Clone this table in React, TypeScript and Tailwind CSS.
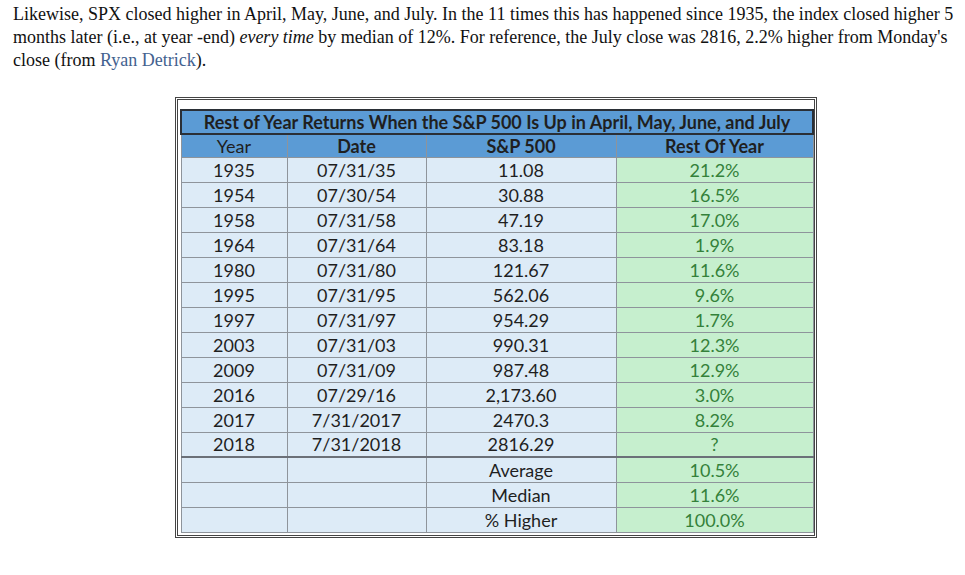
const rows: [string, string, string, string][] = [
  ["1935", "07/31/35", "11.08", "21.2%"],
  ["1954", "07/30/54", "30.88", "16.5%"],
  ["1958", "07/31/58", "47.19", "17.0%"],
  ["1964", "07/31/64", "83.18", "1.9%"],
  ["1980", "07/31/80", "121.67", "11.6%"],
  ["1995", "07/31/95", "562.06", "9.6%"],
  ["1997", "07/31/97", "954.29", "1.7%"],
  ["2003", "07/31/03", "990.31", "12.3%"],
  ["2009", "07/31/09", "987.48", "12.9%"],
  ["2016", "07/29/16", "2,173.60", "3.0%"],
  ["2017", "7/31/2017", "2470.3", "8.2%"],
  ["2018", "7/31/2018", "2816.29", "?"],
];

const summary: [string, string][] = [
  ["Average", "10.5%"],
  ["Median", "11.6%"],
  ["% Higher", "100.0%"],
];

const cell = "h-[25px] border border-[#8e949b] p-0 text-center align-middle leading-none";
const head = "h-[23px] border border-[#8e949b] border-t-2 border-t-[#2a2f36] p-0 text-center align-middle leading-none";

export default function App() {
  return (
    <div className="min-h-[575px] w-[965px] bg-white">
      <p className="whitespace-nowrap px-[13px] pt-[3px] font-['Liberation_Serif',serif] text-[18px] leading-[23px] text-[#111]">
        Likewise, SPX closed higher in April, May, June, and July. In the 11 times this has happened since 1935, the index closed higher 5
        <br />
        months later (i.e., at year -end) <em>every time</em> by median of 12%. For reference, the July close was 2816, 2.2% higher from Monday's
        <br />
        close (from <a className="text-[#43628f]">Ryan Detrick</a>).
      </p>

      <div className="ml-[175px] mt-[25px] w-[642px] border-[3px] border-double border-[#444] bg-white px-[2px] pb-[2px] pt-[9px]">
        <table className="w-[632px] table-fixed border-collapse font-['Lato',sans-serif] text-[18px] text-[#1f1f1f]">
          <colgroup>
            <col className="w-[106px]" />
            <col className="w-[139px]" />
            <col className="w-[190px]" />
            <col className="w-[197px]" />
          </colgroup>
          <thead>
            <tr>
              <th colSpan={4} className="h-[24px] border-2 border-[#2a2f36] bg-[#5b9bd5] p-0 text-center font-bold leading-none">
                Rest of Year Returns When the S&amp;P 500 Is Up in April, May, June, and July
              </th>
            </tr>
            <tr className="bg-[#5b9bd5]">
              <th className={head + " font-normal"}>Year</th>
              <th className={head + " font-bold"}>Date</th>
              <th className={head + " font-bold"}>S&amp;P 500</th>
              <th className={head + " font-bold"}>Rest Of Year</th>
            </tr>
          </thead>
          <tbody>
            {rows.map((r) => (
              <tr key={r[0]}>
                <td className={cell + " bg-[#ddebf7]"}>{r[0]}</td>
                <td className={cell + " bg-[#ddebf7]"}>{r[1]}</td>
                <td className={cell + " bg-[#ddebf7]"}>{r[2]}</td>
                <td className={cell + " bg-[#c6efce] text-[#34813a]"}>{r[3]}</td>
              </tr>
            ))}
            {summary.map((s, i) => (
              <tr key={s[0]}>
                <td className={cell + " bg-[#ddebf7]" + (i === 0 ? " border-t-2 border-t-[#6b7078]" : "")}></td>
                <td className={cell + " bg-[#ddebf7]" + (i === 0 ? " border-t-2 border-t-[#6b7078]" : "")}></td>
                <td className={cell + " bg-[#ddebf7]" + (i === 0 ? " border-t-2 border-t-[#6b7078]" : "")}>{s[0]}</td>
                <td className={cell + " bg-[#c6efce] text-[#34813a]" + (i === 0 ? " border-t-2 border-t-[#6b7078]" : "")}>{s[1]}</td>
              </tr>
            ))}
          </tbody>
        </table>
      </div>
    </div>
  );
}
